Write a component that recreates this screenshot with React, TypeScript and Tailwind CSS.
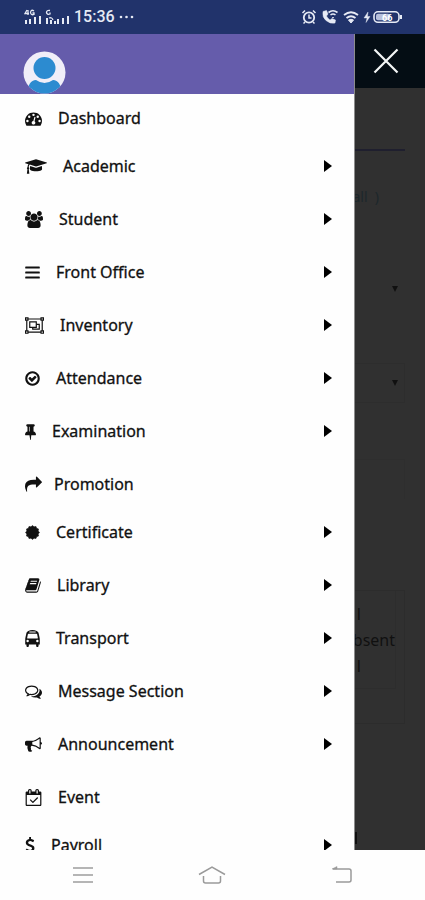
import type { ReactNode } from "react";

type Glyph = { w: number; cls: string; art: ReactNode };

const glyphs: Record<string, Glyph> = {
  dashboard: {
    w: 1792,
    cls: "w-[17px]",
    art: (
      <path
        fillRule="evenodd"
        d="M384 1152a128 128 0 1 0-256 0 128 128 0 1 0 256 0zM576 704a128 128 0 1 0-256 0 128 128 0 1 0 256 0zM1004 1185l101-382q6-26-7.5-48.5t-38.5-29.5-48 6.5-30 39.5l-101 382q-60 5-107 43.5t-63 98.5q-20 77 20 146t117 89 146-20 89-117q16-60-6-117t-72-91zM1664 1152a128 128 0 1 0-256 0 128 128 0 1 0 256 0zM1024 512a128 128 0 1 0-256 0 128 128 0 1 0 256 0zM1472 704a128 128 0 1 0-256 0 128 128 0 1 0 256 0zM1792 1152q0 261-141 483-19 29-54 29h-1402q-35 0-54-29-141-221-141-483 0-182 71-348t191-286 286-191 348-71 348 71 286 191 191 286 71 348z"
      />
    ),
  },
  academic: {
    w: 2304,
    cls: "w-[22px]",
    art: (
      <path d="M1774 836l18 316q4 69-82 128t-235 93.5-323 34.5-323-34.5-235-93.5-82-128l18-316 574 181q22 7 48 7t48-7zm530-324q0 23-22 31l-1120 352q-4 1-10 1t-10-1l-652-206q-43 34-71 111.5t-34 178.5q63 36 63 109 0 69-58 107l58 433q2 14-8 25-9 11-24 11h-192q-15 0-24-11-10-11-8-25l58-433q-58-38-58-107 0-73 65-111 11-207 98-330l-333-104q-22-8-22-31t22-31l1120-352q4-1 10-1t10 1l1120 352q22 8 22 31z" />
    ),
  },
  student: {
    w: 1920,
    cls: "w-[18px]",
    art: (
      <path d="M593 896q-162 5-265 128h-134q-82 0-138-40.5t-56-118.5q0-353 124-353 6 0 43.5 21t97.5 42.5 119 21.5q67 0 133-23-5 37-5 66 0 139 81 256zm1071 637q0 120-73 189.5t-194 69.5h-874q-121 0-194-69.5t-73-189.5q0-53 3.5-103.5t14-109 26.5-108.5 43-97.5 62-81 85.5-53.5 111.5-20q10 0 43 21.5t73 48 107 48 135 21.5 135-21.5 107-48 73-48 43-21.5q61 0 111.5 20t85.5 53.5 62 81 43 97.5 26.5 108.5 14 109 3.5 103.5zm-1024-1277q0 106-75 181t-181 75-181-75-75-181 75-181 181-75 181 75 75 181zm704 384q0 159-112.5 271.5t-271.5 112.5-271.5-112.5-112.5-271.5 112.5-271.5 271.5-112.5 271.5 112.5 112.5 271.5zm576 225q0 78-56 118.5t-138 40.5h-134q-103-123-265-128 81-117 81-256 0-29-5-66 66 23 133 23 59 0 119-21.5t97.5-42.5 43.5-21q124 0 124 353zm-128-609q0 106-75 181t-181 75-181-75-75-181 75-181 181-75 181 75 75 181z" />
    ),
  },
  bars: {
    w: 1536,
    cls: "w-[15px]",
    art: (
      <>
        <rect y="260" width="1536" height="210" rx="60" />
        <rect y="790" width="1536" height="210" rx="60" />
        <rect y="1320" width="1536" height="210" rx="60" />
      </>
    ),
  },
  inventory: {
    w: 2048,
    cls: "w-[19px]",
    art: (
      <g fill="none" stroke="currentColor" strokeWidth="128">
        <path d="M192 192H1856V1600H192z" />
        <path d="M512 512H1216V1088H512z" />
        <path d="M1216 768H1536V1280H832V1088" />
        <g fill="#fff">
          <path d="M64 64H320V320H64zM1728 64H1984V320H1728zM64 1472H320V1728H64zM1728 1472H1984V1728H1728z" />
        </g>
      </g>
    ),
  },
  attendance: {
    w: 1536,
    cls: "w-[15px]",
    art: (
      <path
        transform="translate(-128 0)"
        d="M1299 813l-422 422q-19 19-45 19t-45-19l-294-294q-19-19-19-45t19-45l102-102q19-19 45-19t45 19l147 147 275-275q19-19 45-19t45 19l102 102q19 19 19 45t-19 45zm141 83q0-148-73-273t-198-198-273-73-273 73-198 198-73 273 73 273 198 198 273 73 273-73 198-198 73-273zm224 0q0 209-103 385.5t-279.5 279.5-385.5 103-385.5-103-279.5-279.5-103-385.5 103-385.5 279.5-279.5 385.5-103 385.5 103 279.5 279.5 103 385.5z"
      />
    ),
  },
  pin: {
    w: 1152,
    cls: "w-[11px]",
    art: (
      <path
        transform="translate(-320 0)"
        d="M800 864v-448q0-14-9-23t-23-9-23 9-9 23v448q0 14 9 23t23 9 23-9 9-23zm672 352q0 26-19 45t-45 19h-429l-51 483q-2 12-10.5 20.5t-20.5 8.5h-1q-27 0-32-27l-76-485h-404q-26 0-45-19t-19-45q0-123 78.5-221.5t177.5-98.5v-512q-52 0-90-38t-38-90 38-90 90-38h640q52 0 90 38t38 90-38 90-90 38v512q99 0 177.5 98.5t78.5 221.5z"
      />
    ),
  },
  promotion: {
    w: 1792,
    cls: "w-[17px] -mr-1",
    art: (
      <path d="M1792 640q0 26-19 45l-512 512q-19 19-45 19t-45-19-19-45v-256h-224q-98 0-175.5 6t-154 21.5-133 42.5-105.5 69.5-80 101-48.5 138.5-17.5 181q0 55 5 123 0 6 2.5 23.5t2.5 26.5q0 15-8.5 25t-23.5 10q-16 0-28-17-7-9-13-22t-13.5-30-10.5-24q-127-285-127-451 0-199 53-333 162-403 875-403h224v-256q0-26 19-45t45-19 45 19l512 512q19 19 19 45z" />
    ),
  },
  certificate: {
    w: 1536,
    cls: "w-[15px]",
    art: (
      <path
        strokeLinejoin="round"
        stroke="currentColor"
        strokeWidth="60"
        d="M768 160L930 300 1136 259 1206 458 1405 528 1364 734 1504 896 1364 1058 1405 1264 1206 1334 1136 1533 930 1492 768 1632 606 1492 400 1533 330 1334 131 1264 172 1058 32 896 172 734 131 528 330 458 400 259 606 300z"
      />
    ),
  },
  library: {
    w: 1664,
    cls: "w-4",
    art: (
      <path d="M1639 478q40 57 18 129l-275 906q-19 64-76.5 107.5t-122.5 43.5h-923q-77 0-148.5-53.5t-99.5-131.5q-24-67-2-127 0-4 3-27t4-37q1-8-3-21.5t-3-19.5q2-11 8-21t16.5-23.5 16.5-23.5q23-38 45-91.5t30-91.5q3-10 .5-30t-.5-28q3-11 17-28t17-23q21-36 42-92t25-90q1-9-2.5-32t.5-28q4-13 22-30.5t22-22.5q19-26 42.5-84.5t27.5-96.5q1-8-3-25.5t-2-26.5q2-8 9-18t18-23 17-21q8-12 16.5-30.5t15-35 16-36 19.5-32 26.5-23.5 36-11.5 47.5 5.5l-1 3q38-9 51-9h761q74 0 114 56t18 130l-274 906q-36 119-71.5 153.5t-128.5 34.5h-869q-27 0-38 15-11 16-1 43 24 70 144 70h923q29 0 56-15.5t35-41.5l300-987q7-22 5-57 38 15 59 43zm-1064 2q-4 13 2 22.5t20 9.5h608q13 0 25.5-9.5t16.5-22.5l21-64q4-13-2-22.5t-20-9.5h-608q-13 0-25.5 9.5t-16.5 22.5zm-83 256q-4 13 2 22.5t20 9.5h608q13 0 25.5-9.5t16.5-22.5l21-64q4-13-2-22.5t-20-9.5h-608q-13 0-25.5 9.5t-16.5 22.5z" />
    ),
  },
  transport: {
    w: 1536,
    cls: "w-[15px]",
    art: (
      <path
        fillRule="evenodd"
        d="M384 1152a128 128 0 1 0-256 0 128 128 0 1 0 256 0zM1408 1152a128 128 0 1 0-256 0 128 128 0 1 0 256 0zM1329 830l-72-384q-5-23-22.5-37.5t-40.5-14.5h-852q-23 0-40.5 14.5t-22.5 37.5l-72 384q-5 30 14 53t49 23h996q30 0 49-23t14-53zM1120 208q0-20-14-34t-34-14h-608q-20 0-34 14t-14 34 14 34 34 14h608q20 0 34-14t14-34zM1536 1017v519h-128v128q0 53-37.500 90.500t-90.500 37.500-90.500-37.500-37.500-90.500v-128h-768v128q0 53-37.500 90.500t-90.500 37.500-90.500-37.500-37.500-90.500v-128h-128v-519q0-115 24-224l104-470q10-130 200-226.500t440-96.500 440 96.500 200 226.500l104 470q24 109 24 224z"
      />
    ),
  },
  message: {
    w: 1792,
    cls: "w-[17px]",
    art: (
      <path d="M704 384q-153 0-286 52t-211.500 141-78.500 191q0 82 53 158t149 132l97 56-35 84q34-20 62-39l44-31 53 10q78 14 153 14 153 0 286-52t211.500-141 78.500-191-78.500-191-211.500-141-286-52zm0-128q191 0 353.500 68.500t256.500 186.500 94 257-94 257-256.500 186.500-353.500 68.500q-86 0-176-16-124 88-278 128-36 9-86 16h-3q-11 0-20.500-8t-11.500-21q-1-3-1-6.500t.5-6.500 2-6l2.500-5 3.500-5.500 4-5 4.500-5 4-4.500q5-6 23-25t26-29.500 22.500-29 25-38.500 20.500-44q-124-72-195-177t-71-224q0-139 94-257t256.500-186.500 353.500-68.500zm822 1169q10 24 20.500 44t25 38.500 22.500 29 26 29.500 23 25q1 1 4 4.500t4.500 5 4 5 3.500 5.500l2.500 5 2 6 .5 6.500-1 6.500q-3 14-13 22t-22 7q-50-7-86-16-154-40-278-128-90 16-176 16-271 0-472-132 58 4 88 4 161 0 309-45t264-129q125-92 192-212t67-254q0-77-23-152 129 71 204 178t75 230q0 120-71 224.500t-195 176.500z" />
    ),
  },
  announcement: {
    w: 1792,
    cls: "w-[17px]",
    art: (
      <path d="M1664 640q53 0 90.500 37.500t37.500 90.500-37.500 90.500-90.500 37.500v384q0 52-38 90t-90 38q-417-347-812-380-58 19-91 66t-31 100.500 40 92.500q-20 33-23 65.500t6 58 33.500 55 48 50 61.500 50.500q-29 58-111.500 83t-168.500 11.500-132-55.500q-7-23-29.500-87.500t-32-94.500-23-89-15-101 3.500-98.500 22-110.500h-122q-66 0-113-47t-47-113v-192q0-66 47-113t113-47h480q435 0 896-384 52 0 90 38t38 90v384zm-128 604v-954q-394 302-768 343v270q377 42 768 341z" />
    ),
  },
  event: {
    w: 1664,
    cls: "w-[17px]",
    art: (
      <path
        fillRule="evenodd"
        d="M1303 964l-512 512q-10 9-23 9t-23-9l-288-288q-9-10-9-23t9-22l46-46q9-9 22-9t23 9l220 220 444-444q10-9 23-9t22 9l46 46q9 9 9 22t-9 23zM128 1664h1408v-1024h-1408v1024zM512 448v-288q0-14-9-23t-23-9h-64q-14 0-23 9t-9 23v288q0 14 9 23t23 9h64q14 0 23-9t9-23zM1280 448v-288q0-14-9-23t-23-9h-64q-14 0-23 9t-9 23v288q0 14 9 23t23 9h64q14 0 23-9t9-23zM1664 384v1280q0 52-38 90t-90 38h-1408q-52 0-90-38t-38-90v-1280q0-52 38-90t90-38h128v-96q0-66 47-113t113-47h64q66 0 113 47t47 113v96h384v-96q0-66 47-113t113-47h64q66 0 113 47t47 113v96h128q52 0 90 38t38 90z"
      />
    ),
  },
  payroll: {
    w: 1024,
    cls: "w-[10px]",
    art: (
      <path
        transform="translate(-384 0)"
        d="M1362 1185q0 153-99.500 263.500t-258.500 136.500v175q0 14-9 23t-23 9h-135q-13 0-22.500-9.500t-9.500-22.500v-175q-66-9-127.500-31t-101.500-44.500-74-48-46.500-37.500-17.500-18q-17-21-2-41l103-135q7-10 23-12 15-2 24 9l2 2q113 99 243 125 37 8 74 8 81 0 142.500-43t61.500-122q0-28-15-53t-33.500-42-58.500-37.500-66-32-80-32.500q-39-16-61.500-25t-61.500-26.500-62.500-31-56.500-35.500-53.500-42.500-43.500-49-35.500-58-21-66.500-8.500-78q0-138 98-242t255-134v-180q0-13 9.500-22.500t22.500-9.500h135q14 0 23 9t9 23v176q57 6 110.500 23t87 33.500 63.500 37.500 39 29 15 14q17 18 5 38l-81 146q-8 15-23 16-14 3-27-7-3-3-14.500-12t-39-26.500-58.500-32-74.500-26-85.500-11.500q-95 0-155 43t-60 111q0 26 8.500 48t29.500 41.500 39.500 33 56 31 60.500 27 70 27.500q53 20 81 31.500t76 35 75.500 42.500 62 50 53 63.500 31.500 76.500 13 94z"
      />
    ),
  },
};

const items: { label: string; glyph: string; sub: boolean }[] = [
  { label: "Dashboard", glyph: "dashboard", sub: false },
  { label: "Academic", glyph: "academic", sub: true },
  { label: "Student", glyph: "student", sub: true },
  { label: "Front Office", glyph: "bars", sub: true },
  { label: "Inventory", glyph: "inventory", sub: true },
  { label: "Attendance", glyph: "attendance", sub: true },
  { label: "Examination", glyph: "pin", sub: true },
  { label: "Promotion", glyph: "promotion", sub: false },
  { label: "Certificate", glyph: "certificate", sub: true },
  { label: "Library", glyph: "library", sub: true },
  { label: "Transport", glyph: "transport", sub: true },
  { label: "Message Section", glyph: "message", sub: true },
  { label: "Announcement", glyph: "announcement", sub: true },
  { label: "Event", glyph: "event", sub: false },
  { label: "Payroll", glyph: "payroll", sub: true },
];

function MenuRow({ label, glyph, sub }: { label: string; glyph: string; sub: boolean }) {
  const g = glyphs[glyph];
  return (
    <li className={sub ? "pb-[29px]" : "pb-6"}>
      <button
        type="button"
        className="flex h-6 w-full items-center gap-4 pr-[22px] pl-[25px] text-left text-base leading-6 text-[#111] [-webkit-text-stroke:0.3px_#111]"
      >
        <svg
          viewBox={`0 0 ${g.w} 1792`}
          className={`h-[17px] shrink-0 overflow-visible ${g.cls}`}
          fill="currentColor"
          aria-hidden="true"
        >
          {g.art}
        </svg>
        <span className="flex-1 whitespace-nowrap">{label}</span>
        {sub && (
          <svg viewBox="0 0 8 12" className="h-3 w-2 shrink-0" fill="#000" aria-hidden="true">
            <path d="M0 0L8 6L0 12z" />
          </svg>
        )}
      </button>
    </li>
  );
}

function StatusBar() {
  return (
    <div className="flex h-[34px] shrink-0 items-center justify-between bg-[#21336b] pr-[22px] pl-6 text-[#e6eaf5]">
      <div className="flex items-center">
        <svg viewBox="0 0 46 16" className="mr-1 h-4 w-[46px]" fill="currentColor" aria-hidden="true">
          <path d="M1 11h2v4H1zM5 10h2v5H5zM10 8h2v7h-2zM15 7h2v8h-2z" />
          <path d="M22 9h2v6h-2zM26 11h2v4h-2zM30 12h2v3h-2zM33 10h2v5h-2zM38 9h2v6h-2zM43 7h2v8h-2z" />
          <path
            d="M3 1L1 4.500H5M4 1V6M10 2Q7 0 6.500 3.500Q7 6.500 10 5.500V4H8.500M26 1.500Q22.500 1 22.500 3.500Q23 6 26 5V3.500M25 9Q28 8 29 11"
            fill="none"
            stroke="currentColor"
            strokeWidth="1.300"
          />
        </svg>
        <span className="font-[Roboto,sans-serif] text-base leading-5 font-medium">15:36</span>
        <svg viewBox="0 0 16 4" className="ml-1 h-1 w-4" fill="currentColor" aria-hidden="true">
          <circle cx="2" cy="2" r="1.300" />
          <circle cx="7.500" cy="2" r="1.300" />
          <circle cx="13" cy="2" r="1.300" />
        </svg>
      </div>
      <svg viewBox="0 0 102 16" className="h-4 w-[102px]" fill="none" stroke="currentColor" aria-hidden="true">
        <circle cx="8" cy="8.500" r="5.200" strokeWidth="1.800" />
        <path d="M8 5.500V9H10.500M1.500 4L4 1.500M14.500 4L12 1.500M4 13L2.500 14.500M12 13L13.500 14.500" strokeWidth="1.500" />
        <path d="M22 2.500Q21 8 25 11.500Q29 15 34 14L34.500 11L31 9.500L29 11Q26.500 9.500 25.500 7L27 5L25.500 1.500z" fill="currentColor" strokeWidth="0.500" />
        <path d="M27.500 3.500Q32 0 36.500 3.500M29.500 6Q32 4 34.500 6M32 8V9" strokeWidth="1.600" />
        <path d="M43 6Q50 0.500 57 6" strokeWidth="1.800" />
        <path d="M45.500 9Q50 5.500 54.500 9" strokeWidth="1.800" />
        <path d="M47.500 11L50 14L52.500 11Q50 9.500 47.500 11z" fill="currentColor" />
        <path d="M67 3L63 9H66L65 13.500L69 7.500H66.500z" fill="currentColor" strokeWidth="0.400" />
        <rect x="73" y="2.800" width="25" height="10.500" rx="4" strokeWidth="1.600" />
        <rect x="75" y="4.800" width="14" height="6.500" rx="2" fill="#b6bfdb" stroke="none" />
        <path d="M100 6V10" strokeWidth="2" />
        <text x="81" y="11.500" fontSize="9" fontWeight="700" fontFamily="Roboto, sans-serif" fill="#fff" stroke="none">
          66
        </text>
      </svg>
    </div>
  );
}

function Caret() {
  return (
    <svg viewBox="0 0 6 6" className="h-[6px] w-[6px]" fill="#101010" aria-hidden="true">
      <path d="M0 0H6L3 6z" />
    </svg>
  );
}

function DimmedPage() {
  return (
    <div className="flex w-[70px] shrink-0 flex-col overflow-hidden bg-[#303030]">
      <div className="flex h-[54px] shrink-0 items-center justify-center bg-[#040d14] pr-2">
        <button type="button" aria-label="Close menu" className="p-1">
          <svg viewBox="0 0 26 26" className="h-[26px] w-[26px]" fill="none" stroke="#f4f6f7" strokeWidth="2.200" aria-hidden="true">
            <path d="M1.500 1.500L24.500 24.500M24.500 1.500L1.500 24.500" />
          </svg>
        </button>
      </div>
      <div className="mr-5 h-[63px] shrink-0 border-b-2 border-[#1f1f2e]" />
      <div className="mt-9 mr-[46px] flex h-5 shrink-0 items-center justify-end text-sm whitespace-nowrap text-[#1c272b]">
        all&nbsp;&nbsp;)
      </div>
      <div className="mt-[62px] mr-5 flex h-10 shrink-0 items-center justify-end pr-[7px]">
        <Caret />
      </div>
      <div className="mt-[54px] mr-5 flex h-10 shrink-0 items-center justify-end border-y border-r border-[#2d2d2d] pr-[6px]">
        <Caret />
      </div>
      <div className="mt-14 mr-5 h-10 shrink-0 border-t border-r border-[#2e2e2e]" />
      <div className="mt-[91px] mr-5 h-[134px] shrink-0 border-y border-r border-[#2c2c2c]">
        <div className="mr-2 flex h-[98px] flex-col items-end justify-center border-r border-b border-[#2d2d2d] text-base leading-[26px] text-[#101010]">
          <span className="mr-[34px]">l</span>
          <span>Absent</span>
          <span className="mr-[34px]">l</span>
        </div>
      </div>
      <div className="mt-[108px] h-3 w-[2px] shrink-0 bg-[#101010]" />
    </div>
  );
}

function NavBar() {
  return (
    <nav
      aria-label="System"
      className="grid h-[50px] shrink-0 grid-cols-3 items-center justify-items-center bg-[#fefefe] px-[18px] text-[#9a9a9a]"
    >
      <button type="button" aria-label="Recent apps">
        <svg viewBox="0 0 22 20" className="h-5 w-[22px]" fill="none" stroke="#b5b5b5" strokeWidth="2" aria-hidden="true">
          <path d="M1 3H21M1 10H21M1 17H21" />
        </svg>
      </button>
      <button type="button" aria-label="Home">
        <svg viewBox="0 0 28 20" className="h-5 w-7" fill="none" stroke="currentColor" strokeWidth="1.500" aria-hidden="true">
          <path d="M1 9.500L14 2L27 9.500M5.500 11V16Q5.500 18 7.500 18H20.500Q22.500 18 22.500 16V11" />
        </svg>
      </button>
      <button type="button" aria-label="Back">
        <svg viewBox="0 0 22 20" className="h-5 w-[22px]" fill="none" stroke="currentColor" strokeWidth="1.500" aria-hidden="true">
          <path d="M2 4H18Q20 4 20 6V15Q20 17 18 17H5" />
          <path d="M1 4L6 1.500V4z" fill="currentColor" strokeWidth="0.500" />
        </svg>
      </button>
    </nav>
  );
}

export default function App() {
  return (
    <div className="flex h-screen flex-col overflow-hidden bg-white font-['Noto_Sans','Open_Sans',sans-serif]">
      <StatusBar />
      <main className="flex min-h-0 flex-1">
        <aside className="flex min-w-0 flex-1 flex-col overflow-hidden border-r border-[#8c8c8c] bg-[#fefefe]">
          <header className="h-[60px] shrink-0 overflow-hidden bg-[#655cab] pt-[17px] pl-[23px]">
            <svg viewBox="0 0 44 44" className="h-[44px] w-[44px]" role="img" aria-label="Profile">
              <clipPath id="avatar">
                <circle cx="21.500" cy="21.500" r="21" />
              </clipPath>
              <circle cx="21.500" cy="21.500" r="21" fill="#f0eef8" />
              <g clipPath="url(#avatar)" fill="#2c8bd0">
                <circle cx="21.500" cy="17" r="11" />
                <path d="M4 44Q5 29 13 29Q21.500 35 30 29Q38 29 39 44z" />
              </g>
            </svg>
          </header>
          <nav aria-label="Main" className="min-h-0 flex-1 overflow-hidden pt-3">
            <ul>
              {items.map((item) => (
                <MenuRow key={item.label} {...item} />
              ))}
            </ul>
          </nav>
        </aside>
        <DimmedPage />
      </main>
      <NavBar />
    </div>
  );
}
